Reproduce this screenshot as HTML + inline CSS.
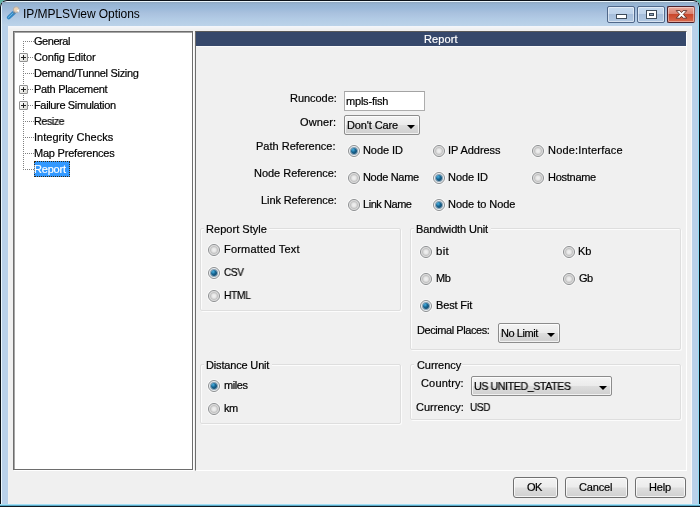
<!DOCTYPE html>
<html lang="en"><head><meta charset="utf-8"><title>IP/MPLSView Options</title>
<style>
html,body{margin:0;padding:0}
body{width:700px;height:507px;overflow:hidden;background:#5fb5a5;font-family:"Liberation Sans", sans-serif;font-size:11px}
#win{position:absolute;left:0;top:0;width:700px;height:507px;overflow:hidden;background:#b9d1ea;border-radius:7px 7px 0 0;
 box-shadow:inset 0 0 0 1px #0b1118, inset 1px 1px 0 1px #eaf6fd, inset -1px 0 0 1px #8fdcf5}
#win:after{content:"";position:absolute;left:0;top:504px;width:700px;height:3px;background:linear-gradient(#a3dff5 0,#a3dff5 1px,#5aa9c6 1px,#5aa9c6 2px,#0e1a22 2px)}
#tb{position:absolute;left:2px;top:2px;width:696px;height:24px;background:linear-gradient(#90a7be 0,#96b4d3 2px,#9bb9d9 6px,#a9c1de 11px,#b2cbe5 17px,#bcd3e9 24px)}
#content{position:absolute;left:8px;top:26px;width:684px;height:478px;background:#f0f0f0;box-shadow:inset 0 2px 2px #f4f6fa,inset -1px 0 0 #f9f9f9}
.t{position:absolute;white-space:nowrap;line-height:13px;transform-origin:0 50%;will-change:transform;-webkit-text-stroke:0.2px currentColor}
.capb{position:absolute;top:6px;height:15px;border:1px solid #50688a;border-radius:2px;background:linear-gradient(#c6d9ee 0,#bfd3ea 46%,#a6bedb 50%,#b1c8e2 100%);box-shadow:inset 0 0 0 1px rgba(255,255,255,.5)}
.capb svg{display:block}
.capb.close{border-color:#4a1f2a #9c5a50 #4a1f2a #4a1f2a;background:linear-gradient(#e9a99b 0,#d9806f 46%,#c9472c 50%,#d9694d 100%);box-shadow:inset 0 0 0 1px rgba(255,255,255,.4)}
#tree{position:absolute;left:13px;top:31px;width:178px;height:437px;background:#fff;border:1px solid #6d6d6d;box-shadow:1px 1px 0 #fff, inset 1px 1px 0 #a6a6a6}
.vdot{position:absolute;width:1px;background:repeating-linear-gradient(#808080 0,#808080 1px,transparent 1px,transparent 2px)}
.hdot{position:absolute;height:1px;background:repeating-linear-gradient(90deg,#808080 0,#808080 1px,transparent 1px,transparent 2px)}
.plus{position:absolute;width:7px;height:7px;border:1px solid #919191;background:linear-gradient(135deg,#fff,#dcdcd6);border-radius:1px}
.plus i{position:absolute;left:1px;top:3px;width:5px;height:1px;background:#222}
.plus u{position:absolute;left:3px;top:1px;width:1px;height:5px;background:#222}
.sel{position:absolute;background:#3399ff;box-sizing:border-box;border:1px dotted #3a2a10}
#rp{position:absolute;left:195px;top:31px;width:492px;height:440px;background:#f0f0f0;border-left:1px solid #6d6d6d;border-top:1px solid #5a5a5a;border-right:1px solid #fff;border-bottom:1px solid #fff;box-sizing:border-box}
#hdr{position:absolute;left:196px;top:32px;width:490px;height:14px;background:#36486b;box-shadow:0 1px 0 #fbfbfb}
.tf{position:absolute;background:#fff;border:1px solid #adadad;border-top-color:#a3a3a3}
.cb{position:absolute;border:1px solid #8c8c8c;border-radius:2px;background:linear-gradient(#f4f4f4 0,#ebebeb 48%,#dddddd 52%,#cfcfcf 100%);box-shadow:inset 0 0 0 1px rgba(255,255,255,.7)}
.cb b{position:absolute;right:4.5px;top:9px;width:0;height:0;border-left:4px solid transparent;border-right:4px solid transparent;border-top:4px solid #000}
.g{position:absolute;border:1px solid #dedede;border-radius:2px;box-shadow:inset 1px 1px 0 #fcfcfc,1px 1px 0 #fcfcfc}
.gm{position:absolute;height:2px;background:#f0f0f0}
.r{position:absolute;width:10px;height:10px;border:1px solid #8c8e90;border-radius:50%;background:radial-gradient(circle at 50% 50%,#f2f2f2 0,#e6e6e6 2px,#c4c4c4 3.5px,#dedede 4.5px,#efefef 5px);box-shadow:0 0 0 1px rgba(255,255,255,.5)}
.r i{display:none}
.r.c{background:#eef3f6}
.r.c i{display:block;position:absolute;left:2px;top:2px;width:6px;height:6px;border-radius:50%;background:radial-gradient(circle at 36% 30%,#45b0e2 0,#17638f 42%,#0a3c5e 100%);box-shadow:0 0 0 1px rgba(15,60,95,.45)}
.btn{position:absolute;border:1px solid #707070;border-radius:3px;background:linear-gradient(#f3f3f3 0,#ececec 48%,#dedede 52%,#d0d0d0 100%);box-shadow:inset 0 0 0 1px rgba(255,255,255,.75)}
</style></head>
<body>
<div id="win">
<div id="tb"></div>
<div id="content"></div>
<svg id="ico" width="18" height="18" viewBox="0 0 18 18" style="position:absolute;left:4px;top:4px">
<path d="M4.8 13.4 L9.8 8.8" stroke="#3587c4" stroke-width="4" stroke-linecap="round" fill="none"/>
<path d="M4.6 13.2 L9.4 8.6" stroke="#86d2f2" stroke-width="1" stroke-linecap="round" stroke-dasharray="1.2 1.6" fill="none"/>
<circle cx="12.2" cy="5.6" r="2.9" fill="#ecd2b4" stroke="#b0b0b0" stroke-width="1.1"/>
<path d="M12.6 6.2 L15.4 5.2 L14.6 8.4 Z" fill="#fdfdfd"/>
<path d="M9.4 8 L11 9.6" stroke="#6f7f8f" stroke-width="1.2" fill="none"/>
</svg>
<div class="t" style="left:23.0px;top:7px;letter-spacing:-0.056px;font-size:12px;line-height:14px;-webkit-text-stroke:0">IP/MPLSView Options</div>
<div class="capb" style="left:607px;width:26px"><svg width="26" height="15" viewBox="0 0 26 15"><rect x="8.5" y="7.5" width="10" height="4" fill="#fff" stroke="#3f4c5a" stroke-width="1"/></svg></div>
<div class="capb" style="left:637px;width:26px"><svg width="26" height="15" viewBox="0 0 26 15"><rect x="8.5" y="3.5" width="10" height="8" fill="#fff" stroke="#3f4c5a" stroke-width="1"/><rect x="11.5" y="6.5" width="4" height="2" fill="#8fa3ba" stroke="#3f4c5a" stroke-width="1"/></svg></div>
<div class="capb close" style="left:667px;width:26px"><svg width="26" height="15" viewBox="0 0 26 15"><path d="M8.2 3.6 h3.7 l1.6 2 l1.6 -2 h3.7 l-3.5 3.8 l3.5 3.8 h-3.7 l-1.6 -2 l-1.6 2 h-3.7 l3.5 -3.8 z" fill="#fff" stroke="#5a2a22" stroke-width="0.9" stroke-linejoin="round"/></svg></div>
<div id="tree"></div>
<div class="vdot" style="left:23px;top:41px;height:129px"></div>
<div class="hdot" style="left:23px;top:41px;width:11px"></div>
<div class="t" style="left:34.0px;top:35px;letter-spacing:-0.45px">General</div>
<div class="hdot" style="left:28px;top:57px;width:6px"></div>
<div class="plus" style="left:19px;top:53px"><i></i><u></u></div>
<div class="t" style="left:34.0px;top:51px;letter-spacing:-0.167px">Config Editor</div>
<div class="hdot" style="left:23px;top:73px;width:11px"></div>
<div class="t" style="left:34.0px;top:67px;letter-spacing:-0.316px">Demand/Tunnel Sizing</div>
<div class="hdot" style="left:28px;top:89px;width:6px"></div>
<div class="plus" style="left:19px;top:85px"><i></i><u></u></div>
<div class="t" style="left:34.0px;top:83px;letter-spacing:-0.308px">Path Placement</div>
<div class="hdot" style="left:28px;top:105px;width:6px"></div>
<div class="plus" style="left:19px;top:101px"><i></i><u></u></div>
<div class="t" style="left:34.0px;top:99px;letter-spacing:-0.353px">Failure Simulation</div>
<div class="hdot" style="left:23px;top:121px;width:11px"></div>
<div class="t" style="left:34.03px;top:115px;letter-spacing:-0.45px;transform:scaleX(0.975)">Resize</div>
<div class="hdot" style="left:23px;top:137px;width:11px"></div>
<div class="t" style="left:34.0px;top:131px;letter-spacing:0.027px">Integrity Checks</div>
<div class="hdot" style="left:23px;top:153px;width:11px"></div>
<div class="t" style="left:34.0px;top:147px;letter-spacing:-0.214px">Map Preferences</div>
<div class="hdot" style="left:23px;top:169px;width:11px"></div>
<div class="sel" style="left:34px;top:161px;width:36px;height:16px"></div>
<div class="t" style="left:34.0px;top:163px;letter-spacing:-0.2px;color:#fff">Report</div>
<div id="rp"></div>
<div id="hdr"></div>
<div class="t" style="left:423.6px;top:33px;letter-spacing:0.1px;color:#fff">Report</div>
<div class="t" style="left:289.7px;top:92px;letter-spacing:-0.043px">Runcode:</div>
<div class="t" style="left:299.7px;top:116px;letter-spacing:0.14px">Owner:</div>
<div class="t" style="left:256.4px;top:140px;letter-spacing:0.0px">Path Reference:</div>
<div class="t" style="left:253.7px;top:167px;letter-spacing:-0.021px">Node Reference:</div>
<div class="t" style="left:260.7px;top:194px;letter-spacing:-0.093px">Link Reference:</div>
<div class="tf" style="left:344px;top:91px;width:79px;height:18px"></div>
<div class="t" style="left:345.9px;top:95px;letter-spacing:-0.2px">mpls-fish</div>
<div class="cb" style="left:344px;top:115px;width:74px;height:18px"><b></b></div>
<div class="t" style="left:346.7px;top:119px;letter-spacing:-0.111px">Don&#39;t Care</div>
<div class="r c" style="left:348px;top:145px"><i></i></div>
<div class="t" style="left:363.3px;top:144px;letter-spacing:-0.083px">Node ID</div>
<div class="r" style="left:433px;top:145px"><i></i></div>
<div class="t" style="left:448.4px;top:144px;letter-spacing:-0.056px">IP Address</div>
<div class="r" style="left:532px;top:145px"><i></i></div>
<div class="t" style="left:547.6px;top:144px;letter-spacing:0.185px">Node:Interface</div>
<div class="r" style="left:348px;top:172px"><i></i></div>
<div class="t" style="left:363.3px;top:171px;letter-spacing:-0.325px">Node Name</div>
<div class="r c" style="left:433px;top:172px"><i></i></div>
<div class="t" style="left:448.4px;top:171px;letter-spacing:-0.067px">Node ID</div>
<div class="r" style="left:532px;top:172px"><i></i></div>
<div class="t" style="left:547.6px;top:171px;letter-spacing:-0.271px">Hostname</div>
<div class="r" style="left:348px;top:199px"><i></i></div>
<div class="t" style="left:363.3px;top:198px;letter-spacing:-0.45px">Link Name</div>
<div class="r c" style="left:433px;top:199px"><i></i></div>
<div class="t" style="left:448.4px;top:198px;letter-spacing:-0.036px">Node to Node</div>
<div class="g" style="left:200px;top:228px;width:199px;height:81px"></div>
<div class="gm" style="left:204px;top:228px;width:65px"></div>
<div class="t" style="left:205.6px;top:223px;letter-spacing:0.036px">Report Style</div>
<div class="r" style="left:208px;top:244px"><i></i></div>
<div class="t" style="left:223.6px;top:243px;letter-spacing:0.185px">Formatted Text</div>
<div class="r c" style="left:208px;top:267px"><i></i></div>
<div class="t" style="left:223.68px;top:266px;letter-spacing:-0.45px;transform:scaleX(0.915)">CSV</div>
<div class="r" style="left:208px;top:290px"><i></i></div>
<div class="t" style="left:223.66px;top:289px;letter-spacing:-0.45px;transform:scaleX(0.938)">HTML</div>
<div class="g" style="left:410px;top:228px;width:269px;height:120px"></div>
<div class="gm" style="left:414px;top:228px;width:77px"></div>
<div class="t" style="left:416.0px;top:223px;letter-spacing:-0.154px">Bandwidth Unit</div>
<div class="r" style="left:420px;top:246px"><i></i></div>
<div class="t" style="left:435.96px;top:245px;letter-spacing:0.3px;transform:scaleX(1.038)">bit</div>
<div class="r" style="left:563px;top:246px"><i></i></div>
<div class="t" style="left:578.3px;top:245px;letter-spacing:-0.2px">Kb</div>
<div class="r" style="left:420px;top:273px"><i></i></div>
<div class="t" style="left:436.0px;top:272px;letter-spacing:-0.45px">Mb</div>
<div class="r" style="left:563px;top:273px"><i></i></div>
<div class="t" style="left:578.6px;top:272px;letter-spacing:-0.45px">Gb</div>
<div class="r c" style="left:420px;top:300px"><i></i></div>
<div class="t" style="left:436.0px;top:299px;letter-spacing:-0.143px">Best Fit</div>
<div class="t" style="left:417.0px;top:324px;letter-spacing:-0.429px">Decimal Places:</div>
<div class="cb" style="left:498px;top:323px;width:60px;height:18px"><b></b></div>
<div class="t" style="left:501.0px;top:327px;letter-spacing:-0.429px">No Limit</div>
<div class="g" style="left:200px;top:364px;width:199px;height:58px"></div>
<div class="gm" style="left:204px;top:364px;width:68px"></div>
<div class="t" style="left:206.0px;top:359px;letter-spacing:-0.167px">Distance Unit</div>
<div class="r c" style="left:208px;top:380px"><i></i></div>
<div class="t" style="left:224.0px;top:379px;letter-spacing:-0.4px">miles</div>
<div class="r" style="left:208px;top:403px"><i></i></div>
<div class="t" style="left:224.0px;top:402px;letter-spacing:-0.45px">km</div>
<div class="g" style="left:410px;top:364px;width:269px;height:54px"></div>
<div class="gm" style="left:414px;top:364px;width:48px"></div>
<div class="t" style="left:416.7px;top:359px;letter-spacing:-0.071px">Currency</div>
<div class="t" style="left:420.7px;top:377px;letter-spacing:0.157px">Country:</div>
<div class="cb" style="left:471px;top:376px;width:139px;height:18px"><b></b></div>
<div class="t" style="left:473.63px;top:380px;letter-spacing:-0.45px;transform:scaleX(0.972)">US UNITED_STATES</div>
<div class="t" style="left:415.7px;top:401px;letter-spacing:0.013px">Currency:</div>
<div class="t" style="left:469.79px;top:401px;letter-spacing:-0.45px;transform:scaleX(0.915)">USD</div>
<div class="btn" style="left:513px;top:477px;width:43px;height:19px"></div>
<div class="t" style="left:526.6px;top:481px;letter-spacing:-0.45px">OK</div>
<div class="btn" style="left:565px;top:477px;width:61px;height:19px"></div>
<div class="t" style="left:579.2px;top:481px;letter-spacing:-0.16px">Cancel</div>
<div class="btn" style="left:635px;top:477px;width:49px;height:19px"></div>
<div class="t" style="left:648.6px;top:481px;letter-spacing:-0.2px">Help</div>
</div>
</body></html>
